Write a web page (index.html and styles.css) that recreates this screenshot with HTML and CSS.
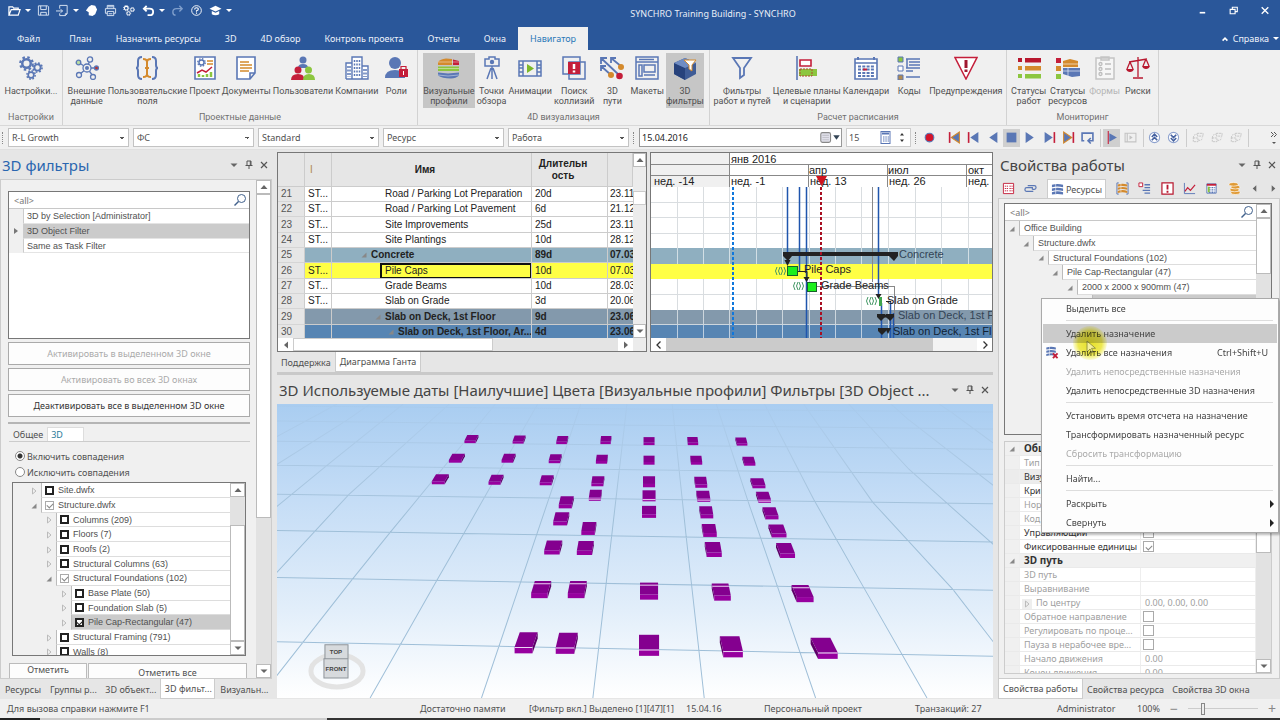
FILE: index.html
```html
<!DOCTYPE html>
<html lang="ru">
<head>
<meta charset="utf-8">
<title>SYNCHRO Training Building - SYNCHRO</title>
<link rel="stylesheet" href="styles.css">
</head>
<body>
<svg class="defs" aria-hidden="true">
  <symbol id="gear" viewBox="0 0 12 12"><circle cx="6" cy="6" r="3.400" fill="none" stroke="currentColor" stroke-width="2"/><circle cx="6" cy="6" r="5" fill="none" stroke="currentColor" stroke-width="1.800" stroke-dasharray="2 1.930"/></symbol>
  <symbol id="pin" viewBox="0 0 10 10"><path d="M3 1h4v4.500M3 1v4.500M6.300 1v4.500M1.500 5.500h7M5 5.500V9" fill="none" stroke="#555"/></symbol>
  <symbol id="cross" viewBox="0 0 10 10"><path d="M2 2l6 6M8 2l-6 6" fill="none" stroke="currentColor" stroke-width="1.200"/></symbol>
  <symbol id="drop" viewBox="0 0 10 10"><path d="M1.500 3.500h7l-3.500 3.500z" fill="#666"/></symbol>
  <symbol id="up" viewBox="0 0 10 10"><path d="M1.500 7h7l-3.500-4z" fill="#666"/></symbol>
  <symbol id="left" viewBox="0 0 10 10"><path d="M7 1.500v7l-4-3.500z" fill="#666"/></symbol>
  <symbol id="right" viewBox="0 0 10 10"><path d="M3 1.500v7l4-3.500z" fill="#666"/></symbol>
  <symbol id="open" viewBox="0 0 10 10"><path d="M7.500 2.500v5h-5z" fill="#888"/></symbol>
  <symbol id="shut" viewBox="0 0 10 10"><path d="M3.500 2v6l3.500-3z" fill="none" stroke="#bbb"/></symbol>
  <symbol id="lens" viewBox="0 0 14 14"><circle cx="8.500" cy="5.500" r="4" fill="none" stroke="#41618c"/><path d="M5.500 8.500L1.500 12.500" stroke="#41618c" stroke-width="1.500"/></symbol>
  <symbol id="layers" viewBox="0 0 24 24"><path d="M1 6q2-3 8-3.500l6 .5v6H1z" fill="#d48a2d"/><path d="M16 3.500l6 1.500v4h-6z" fill="#c41e3a"/><path d="M1 10.500h21V15H1z" fill="#8cc63f"/><path d="M1 16.500l10 1 11-1v3q-3 3-8 3-9 0-13-3z" fill="#5a77b5"/><path d="M1 6h21M1 12.500h21M1 19l10 1 11-1" stroke="#fff" stroke-width=".700" opacity=".6" fill="none"/></symbol>
  <symbol id="discs" viewBox="0 0 14 14"><path d="M1 2q6-2 12 0v2.500q-6-1.500-12 0zM1 6q6-2 12 0v2.500q-6-1.500-12 0zM1 10q6-2 12 0v2.500q-6-1.500-12 0z" fill="currentColor"/><path d="M5 1v11" stroke="#fff" stroke-width=".6"/></symbol>
  <symbol id="prev" viewBox="0 0 12 12"><path d="M10.500 1v10L3 6z" fill="#5a77b5"/></symbol>
  <symbol id="next" viewBox="0 0 12 12"><path d="M1.500 1v10L9 6z" fill="#5a77b5"/></symbol>
  <symbol id="form" viewBox="0 0 14 12"><path d="M7 1.500h6v3H7zM2.500 6.500h5v4h-5zM2.500 6.500q0-4 4-4M8 9h2q2 0 2-3" fill="none" stroke="#c3c3c3" stroke-dasharray="2 .8"/></symbol>
</svg>

<header class="titlebar">
  <div class="quick">
    <button aria-label="Открыть"><svg viewBox="0 0 14 12"><path d="M1 11V2h4l1 1.500h5V5M1 11l2.500-6H13L11 11z" fill="none" stroke="#fff" stroke-width="1.300"/></svg></button><i class="tri"></i>
    <button aria-label="Сохранить"><svg viewBox="0 0 14 12"><path d="M1.500 1h10l1 1v9h-11zM4 1v4h6V1M4 11V8h6v3" fill="none" stroke="#dfe8f5"/></svg></button>
    <button aria-label="Импорт"><svg viewBox="0 0 14 12"><path d="M4 4V.5h8v9l-2 2H4V9M0 6.500h7M5 4.500l2 2-2 2M12 9.500h-2v2" fill="none" stroke="#dfe8f5"/></svg></button><i class="tri"></i>
    <button aria-label="Панорама"><svg viewBox="0 0 14 12"><path d="M4 2l3-2 4 1 2 4-2 5-3 2-4-1v-3L1 6z" fill="#fff"/></svg></button>
    <button aria-label="Печать"><svg viewBox="0 0 14 12"><path d="M3.500 4V.5h7V4M3.500 9h-2V4h11v5h-2M3.500 7h7v4.500h-7zM4 2h6M5 9.500h4" fill="none" stroke="#dfe8f5"/></svg></button>
    <button class="white" aria-label="Параметры"><svg viewBox="0 0 14 12"><use href="#gear" width="7" height="7"/><use href="#gear" x="7" y="2" width="6" height="6"/><use href="#gear" x="3" y="6" width="6" height="6"/></svg></button>
    <button aria-label="Отменить"><svg viewBox="0 0 14 12"><path d="M5 1L2 4l3 3M2 4h6q4 0 4 3.500T8 11H6" fill="none" stroke="#fff" stroke-width="2"/></svg></button><i class="tri"></i>
    <button aria-label="Вернуть"><svg viewBox="0 0 14 12"><path d="M9 1l3 3-3 3M12 4H6Q2 4 2 7.500T5 11" fill="none" stroke="#7f9ecb" stroke-width="1.500"/></svg></button>
    <button aria-label="Помощь"><svg viewBox="0 0 14 12"><circle cx="7" cy="6" r="5.200" fill="none" stroke="#fff"/><path d="M5 4.800q0-1.800 2-1.800t2 1.500-2 1.800v1M7 8.200v1.200" fill="none" stroke="#fff" stroke-width="1.200"/></svg></button>
    <button aria-label="Обучение"><svg viewBox="0 0 14 12"><path d="M7 1l6.500 3-6.500 3-6.500-3zM3 6.500l4 2 4-2V10q-4 2-8 0z" fill="#fff"/></svg></button>
    <i class="tri bar"></i>
  </div>
  <h1 class="app-title">SYNCHRO Training Building - SYNCHRO</h1>
  <div class="winbtns">
    <button aria-label="Свернуть"><svg viewBox="0 0 10 10"><path d="M2 7h5" stroke="#fff" stroke-width="1.500"/></svg></button>
    <button aria-label="Восстановить"><svg viewBox="0 0 10 10"><path d="M1.500 4h4.500v4h-4.500zM3.500 4V2H8v4H6" fill="none" stroke="#fff"/></svg></button>
    <button class="white" aria-label="Закрыть"><svg viewBox="0 0 10 10"><use href="#cross"/></svg></button>
  </div>
</header>
<nav class="tabs">
  <button class="file">Файл</button><button>План</button><button>Назначить ресурсы</button><button>3D</button><button>4D обзор</button><button>Контроль проекта</button><button>Отчеты</button><button>Окна</button><button class="on">Навигатор</button>
  <button class="help"><svg viewBox="0 0 10 10"><path d="M2 7l3-3 3 3" fill="none" stroke="#fff" stroke-width="2"/></svg>Справка <i class="tri"></i></button>
</nav>

<section class="ribbon" aria-label="Навигатор">
  <div class="group g1"><div class="items">
    <button><svg viewBox="0 0 24 24" class="blue"><use href="#gear" x="0" y="0" width="15" height="15"/><use href="#gear" x="13" y="6" width="11" height="11"/><use href="#gear" x="7" y="14" width="10" height="10"/></svg>Настройки...</button>
  </div><h2>Настройки</h2></div>
  <div class="group g2"><div class="items">
    <button><svg viewBox="0 0 24 24"><path d="M12 12L3 6M12 12l3-8M12 12h9M12 12l-8 7M12 12l6 8" stroke="#5a77b5" stroke-width="1.300"/><g fill="#f0f0f0" stroke="#5a77b5" stroke-width="1.300"><circle cx="3.500" cy="6.500" r="2.300" fill="#b9dca0"/><circle cx="15" cy="3.500" r="2.600"/><circle cx="21.500" cy="12" r="2" fill="#b33" /><circle cx="4" cy="19" r="2.500"/><circle cx="18" cy="21" r="2.500"/><circle cx="12" cy="12" r="4"/></g><circle cx="12" cy="12" r="2" fill="#5a77b5"/></svg>Внешние<br>данные</button>
    <button><svg viewBox="0 0 24 24"><path d="M7 1q-4 0-4 4v4q0 3-2 3 2 0 2 3v4q0 4 4 4M17 1q4 0 4 4v4q0 3 2 3-2 0-2 3v4q0 4-4 4" fill="none" stroke="#5a77b5" stroke-width="2"/><path d="M8 3q4 0 4 3v12q0 3-4 3M16 3q-4 0-4 3v12q0 3 4 3M10 12h4" fill="none" stroke="#d48a2d" stroke-width="2"/></svg>Пользовательские<br>поля</button>
    <button><svg viewBox="0 0 24 24"><path d="M2 1h20v22H2z" fill="#fff" stroke="#5a77b5" stroke-width="1.600"/><g class="blue"><use href="#gear" x="4" y="2" width="9" height="9"/></g><path d="M14 5h6M14 8h6" stroke="#d48a2d" stroke-width="1.500"/><path d="M4 17l5-3 4 2 6-5" fill="none" stroke="#c41e3a" stroke-width="1.500"/><path d="M6 21v-3M10 21v-2M14 21v-3M18 21v-5" stroke="#8cc63f" stroke-width="2.500"/></svg>Проект</button>
    <button><svg viewBox="0 0 24 24"><path d="M3 1h18v16l-5 6H3zM21 17h-5v6" fill="#fff" stroke="#5a77b5" stroke-width="1.600"/><path d="M6 6h9M6 9h12M6 12h12M6 15h9" stroke="#d48a2d" stroke-width="1.600"/></svg>Документы</button>
    <button><svg viewBox="0 0 24 24"><circle cx="12" cy="4" r="3.500" fill="#5a77b5"/><path d="M7 12q0-4 5-4t5 4z" fill="#5a77b5"/><circle cx="7" cy="14" r="3.500" fill="#c41e3a"/><path d="M0 24q0-6 7-6t6 6z" fill="#c41e3a"/><circle cx="17.500" cy="14" r="3.500" fill="#8cc63f"/><path d="M12 24q0-6 6-6t6 6z" fill="#8cc63f"/></svg>Пользователи</button>
    <button><svg viewBox="0 0 24 24"><path d="M7 23V1h10v22M1 23V7h6v16M17 10h6v13H1" fill="#fff" stroke="#5a77b5" stroke-width="1.400"/><path d="M9.500 4v16M12 4v16M14.500 4v16M3 10v11M5 10v11M19 13v8M21 13v8" stroke="#5a77b5" stroke-width="1.500" stroke-dasharray="2 1.500"/></svg>Компании</button>
    <button class="narrow"><svg viewBox="0 0 24 24"><circle cx="11" cy="7" r="6" fill="#5a77b5"/><path d="M1 22q0-8 10-8t10 8z" fill="#5a77b5"/><path d="M15 13h9v8h-9z" fill="#c41e3a"/><path d="M17 13v-2.500h5V13M19.500 15v4M17.500 17h4" fill="none" stroke="#c41e3a" stroke-width="1.200"/><path d="M19.500 15v4" stroke="#fff"/></svg>Роли</button>
  </div><h2>Проектные данные</h2></div>
  <div class="group g3"><div class="items">
    <button class="active"><svg viewBox="0 0 24 24"><use href="#layers" width="24" height="24"/></svg>Визуальные<br>профили</button>
    <button><svg viewBox="0 0 24 24"><path d="M5 3h4V1h6v2h4v7H5zM12 10v13M11 12L7 23M13 12l4 11" fill="none" stroke="#5a77b5" stroke-width="1.500"/><circle cx="12" cy="6" r="2.200" fill="#5a77b5"/></svg>Точки<br>обзора</button>
    <button><svg viewBox="0 0 24 24"><path d="M1 5h22v15H1zM5 5v15M19 5v15M1 9h4M1 12h4M1 16h4M19 9h4M19 12h4M19 16h4" fill="none" stroke="#5a77b5" stroke-width="1.500"/><path d="M9 8v9l7-4.500z" fill="#7cb829"/></svg>Анимации</button>
    <button><svg viewBox="0 0 24 24"><path d="M1 1h17v17H1zM7 6h16v17H7z" fill="none" stroke="#5a77b5" stroke-width="1.500"/><path d="M6 6h12v12H6z" fill="#c41e3a"/><path d="M12 8v5M12 14.500v2" stroke="#fff" stroke-width="2.500"/></svg>Поиск<br>коллизий</button>
    <button class="narrow"><svg viewBox="0 0 24 24"><path d="M1 2l18 17M11 2l11 9M1 10l10 9M1 8V2h6M11 7V2h5M1 15v-5h5" fill="none" stroke="#5a77b5" stroke-width="1.800"/><circle cx="21" cy="11" r="3" fill="#d48a2d"/><circle cx="11" cy="19" r="3" fill="#d48a2d"/><circle cx="19.500" cy="20" r="3.300" fill="#c41e3a"/></svg>3D<br>пути</button>
    <button><svg viewBox="0 0 24 24"><path d="M1 1h22v22H1zM1 6h22M4 9h3v11H4zM9 9h11v7H9zM9 19h11M4 3.500h15" fill="none" stroke="#5a77b5" stroke-width="1.500"/></svg>Макеты</button>
    <button class="active"><svg viewBox="0 0 24 24"><path d="M1 7l11-5 11 5v11l-11 6-11-6z" fill="#3f5c96"/><path d="M1 7l11 5v12l-11-6z" fill="#27427c"/><path d="M12 2l11 5-11 5-11-5z" fill="#6f8cc3"/><path d="M11 4h12l-4 5v6l-3-2V9z" fill="#fff" stroke="#d48a2d"/></svg>3D<br>фильтры</button>
  </div><h2>4D визуализация</h2></div>
  <div class="group g4"><div class="items">
    <button><svg viewBox="0 0 24 24"><path d="M3 2h18l-7 10v7l-4 3V12z" fill="none" stroke="#5a77b5" stroke-width="1.800"/></svg>Фильтры<br>работ и путей</button>
    <button><svg viewBox="0 0 24 24"><path d="M2 0v24" stroke="#5a77b5" stroke-width="1.600"/><path d="M5 4h11v6H5z" fill="#fff" stroke="#c41e3a" stroke-width="1.600"/><path d="M4 13h18v7H4z" fill="#8cc63f"/><path d="M5 13h12v7H5z" fill="none" stroke="#b0492c" stroke-dasharray="2 1"/></svg>Целевые планы<br>и сценарии</button>
    <button><svg viewBox="0 0 24 24"><path d="M1 3h22v20H1zM1 7h22" fill="#fff" stroke="#5a77b5" stroke-width="1.600"/><path d="M4 1v4M20 1v4M4 10.500h16M4 13.500h16M4 17h16M4 20h16" stroke="#5a77b5" stroke-width="2" stroke-dasharray="3 1.300"/><path d="M9 13.500h4" stroke="#c41e3a" stroke-width="2"/></svg>Календари</button>
    <button class="codes"><svg viewBox="0 0 24 24"><path d="M1 1h5v5H1z" fill="#8cc63f" stroke="#5a77b5"/><path d="M1 10h5v5H1z" fill="#fff" stroke="#5a77b5"/><path d="M1 19h5v5H1z" fill="#b08a50" stroke="#5a77b5"/><path d="M9 3h14M12 6h11M12 9h11M9 12h14M9 15h7M9 21h14M10 3v9" stroke="#5a77b5" stroke-width="1.500"/></svg>Коды</button>
    <button><svg viewBox="0 0 24 24"><path d="M1 1.500h22L12 23z" fill="#fff" stroke="#c41e3a" stroke-width="1.500"/><path d="M12 4v8M12 13.500v2.500" stroke="#a01830" stroke-width="3"/></svg>Предупреждения</button>
  </div><h2>Расчет расписания</h2></div>
  <div class="group g5"><div class="items">
    <button><svg viewBox="0 0 24 24"><path d="M1 2h4v4H1zM8 2h16v4.500H8z" fill="#b8182f"/><path d="M1 10h4v4H1zM8 10h16v4.500H8z" fill="#d48a2d"/><path d="M1 18h4v4H1zM8 18h16v4.500H8z" fill="#8cc63f"/></svg>Статусы<br>работ</button>
    <button><svg viewBox="0 0 24 24"><path d="M0 2h5v5H0z" fill="#c41e3a"/><path d="M0 10h5v5H0z" fill="#d48a2d"/><path d="M0 18h5v5H0z" fill="#8cc63f"/><path d="M7 5l7-2 8 2v6H7z" fill="#d48a2d"/><path d="M7 12h17v8l-8 1-9-3z" fill="#5a77b5"/><path d="M7 8h16M7 15h17M12 12v8" stroke="#fff" stroke-width=".600"/></svg>Статусы<br>ресурсов</button>
    <button class="off" disabled><svg viewBox="0 0 24 24"><path d="M3 2h18v21H3zM8 1h8v3H8z" fill="#f6f6f6" stroke="#c4c4c4" stroke-width="1.500"/><g fill="none" stroke="#bdbdbd" stroke-width="1.300"><circle cx="7.500" cy="8" r="1.500"/><circle cx="7.500" cy="13" r="1.500"/><circle cx="7.500" cy="18" r="1.500"/><path d="M12 8h6M12 13h6M12 18h6"/></g></svg>Формы</button>
    <button class="narrow"><svg viewBox="0 0 24 24"><path d="M12 1v20M7 22h10M3 6l18-3M4 6l-3 7M4 6l3 7M20 3l-3 7M20 3l3 7" fill="none" stroke="#b8182f" stroke-width="1.300"/><path d="M0 13h8q-1 3-4 3t-4-3zM16 10h8q-1 3-4 3t-4-3z" fill="#b8182f"/></svg>Риски</button>
  </div><h2>Мониторинг</h2></div>
</section>

<section class="toolbar" aria-label="Панель инструментов">
  <i class="grip"></i>
  <select aria-label="Профиль"><option>R-L Growth</option></select>
  <select aria-label="Код"><option>ФС</option></select>
  <select aria-label="Стандарт"><option>Standard</option></select>
  <select aria-label="Ресурс"><option>Ресурс</option></select>
  <select aria-label="Работа"><option>Работа</option></select>
  <i class="grip"></i>
  <label class="date"><input value="15.04.2016" aria-label="Дата"><svg viewBox="0 0 20 12"><rect x="1.500" y="1.500" width="9" height="9" rx="1.500" fill="#e0e0ea" stroke="#888"/><path d="M3 4h6M3 6h6M3 8h6" stroke="#c4c4cc"/><path d="M13 4h6l-3 4z" fill="#345"/></svg></label>
  <label class="spin"><input value="15" aria-label="Шаг"><svg viewBox="0 0 32 14"><rect x="3" y="1" width="9" height="12" fill="#fff" stroke="#5a77b5"/><path d="M4 3h7" stroke="#5a77b5" stroke-width="2"/><path d="M5 6.500h6M5 8.500h6M5 10.500h6" stroke="#5a77b5" stroke-dasharray="1.500 .8"/><path d="M22 5h4l-2-2.500zM22 9h4l-2 2.500z" fill="#333"/></svg></label>
  <i class="grip"></i>
  <div class="player">
    <button class="rec" aria-label="Запись"><svg viewBox="0 0 12 12"><circle cx="6" cy="6" r="4" fill="#d4142a" stroke="#5a77b5"/></svg></button>
    <button aria-label="Начало"><svg viewBox="0 0 12 12"><path d="M10.500 1v10L3 6z" fill="#5a77b5" stroke="#d48a2d"/><path d="M1.500 1v10" stroke="#c41e3a" stroke-width="1.500"/></svg></button>
    <button aria-label="Шаг назад"><svg viewBox="0 0 12 12"><use href="#prev" width="12" height="12"/><path d="M1.500 1v10" stroke="#c41e3a" stroke-width="1.500"/></svg></button>
    <button aria-label="Назад"><svg viewBox="0 0 12 12"><use href="#prev" width="12" height="12"/></svg></button>
    <button class="active" aria-label="Стоп"><svg viewBox="0 0 12 12"><path d="M1.500 1.500h9v9h-9z" fill="#5a77b5"/></svg></button>
    <button aria-label="Вперед"><svg viewBox="0 0 12 12"><use href="#next" width="12" height="12"/></svg></button>
    <button aria-label="Шаг вперед"><svg viewBox="0 0 12 12"><use href="#next" width="12" height="12"/><path d="M10.500 1v10" stroke="#c41e3a" stroke-width="1.500"/></svg></button>
    <button aria-label="Конец"><svg viewBox="0 0 12 12"><path d="M1.500 1v10L9 6z" fill="#5a77b5" stroke="#d48a2d"/><path d="M10.500 1v10" stroke="#c41e3a" stroke-width="1.500"/></svg></button>
    <button class="sep" aria-label="Цикл"><svg viewBox="0 0 12 12"><path d="M3 9H1V2h10v7H7M9 6.500L6.500 9 9 11.500" fill="none" stroke="#5a77b5" stroke-width="1.500"/></svg></button>
    <button class="active" aria-label="Фокус"><svg viewBox="0 0 12 12"><path d="M3 0v12" stroke="#c41e3a"/><path d="M4 2v8l7-4z" fill="#5a77b5"/></svg></button>
    <button class="sep" aria-label="Кадр"><svg viewBox="0 0 12 12"><path d="M1 2h10v8H1zM3 2v8" fill="none" stroke="#c3c3c3"/><path d="M5 4v4l3-2z" fill="#c3c3c3"/></svg></button>
    <button aria-label="Вверх"><svg viewBox="0 0 12 12"><circle cx="6" cy="6" r="4.700" fill="#fff" stroke="#8fa3cf"/><path d="M3.500 5.500L6 3l2.500 2.500M3.500 8.500L6 6l2.500 2.500" fill="none" stroke="#45619f" stroke-width="1.500"/></svg></button>
    <button class="sep" aria-label="Вниз"><svg viewBox="0 0 12 12"><circle cx="6" cy="6" r="4.700" fill="#fff" stroke="#8fa3cf"/><path d="M3.500 3.500L6 6l2.500-2.500M3.500 6.500L6 9l2.500-2.500" fill="none" stroke="#45619f" stroke-width="1.500"/></svg></button>
    <button aria-label="Форма 1" disabled><svg viewBox="0 0 14 12"><use href="#form" width="14" height="12"/></svg></button>
    <button aria-label="Форма 2" disabled><svg viewBox="0 0 14 12"><use href="#form" width="14" height="12"/></svg></button>
    <button class="sep" aria-label="Форма 3" disabled><svg viewBox="0 0 14 12"><use href="#form" width="14" height="12"/></svg></button>
  </div>
  <button class="more" aria-label="Еще"><svg viewBox="0 0 8 18"><path d="M1 3l2.500 2.500L1 8M4 3l2.500 2.500L4 8" fill="none" stroke="#555"/><path d="M2 13h4l-2 2z" fill="#555"/></svg></button>
</section>

<main class="work">
  <section class="panel left">
    <header><h2 class="accent">3D фильтры</h2><button aria-label="Меню"><svg><use href="#drop"/></svg></button><button aria-label="Закрепить"><svg><use href="#pin"/></svg></button><button aria-label="Закрыть"><svg><use href="#cross"/></svg></button></header>
    <div class="pbody">
      <div class="filters">
        <div class="box flist">
          <label class="search"><input placeholder="&lt;all&gt;" aria-label="Поиск фильтра"><svg><use href="#lens"/></svg></label>
          <ul class="frows"><li>3D by Selection [Administrator]</li><li class="sel">3D Object Filter</li><li>Same as Task Filter</li></ul>
        </div>
        <button class="wide" disabled>Активировать в выделенном 3D окне</button>
        <button class="wide" disabled>Активировать во всех 3D окнах</button>
        <button class="wide">Деактивировать все в выделенном 3D окне</button>
        <hr class="thick">
        <div class="minitabs"><button>Общее</button><button class="on">3D</button></div>
        <label class="radio"><input type="radio" name="match" checked>Включить совпадения</label>
        <label class="radio"><input type="radio" name="match">Исключить совпадения</label>
        <div class="box treebox">
          <ul class="tree">
            <li class="l1"><svg><use href="#shut"/></svg><label><input type="checkbox">Site.dwfx</label></li>
            <li class="l1"><svg><use href="#open"/></svg><label><input type="checkbox" class="soft" checked>Structure.dwfx</label></li>
            <li class="l2"><svg><use href="#shut"/></svg><label><input type="checkbox">Columns (209)</label></li>
            <li class="l2"><svg><use href="#shut"/></svg><label><input type="checkbox">Floors (7)</label></li>
            <li class="l2"><svg><use href="#shut"/></svg><label><input type="checkbox">Roofs (2)</label></li>
            <li class="l2"><svg><use href="#shut"/></svg><label><input type="checkbox">Structural Columns (63)</label></li>
            <li class="l2"><svg><use href="#open"/></svg><label><input type="checkbox" class="soft" checked>Structural Foundations (102)</label></li>
            <li class="l3"><svg><use href="#shut"/></svg><label><input type="checkbox">Base Plate (50)</label></li>
            <li class="l3"><svg><use href="#shut"/></svg><label><input type="checkbox">Foundation Slab (5)</label></li>
            <li class="l3 sel"><svg><use href="#shut"/></svg><label><input type="checkbox" checked>Pile Cap-Rectangular (47)</label></li>
            <li class="l2"><svg><use href="#shut"/></svg><label><input type="checkbox">Structural Framing (791)</label></li>
            <li class="l2"><svg><use href="#shut"/></svg><label><input type="checkbox">Walls (8)</label></li>
          </ul>
          <div class="sb"><button aria-label="Вверх"><svg><use href="#up"/></svg></button><i class="track s28"></i><i class="thumb"></i><button aria-label="Вниз"><svg><use href="#drop"/></svg></button></div>
        </div>
        <div class="cut"><button>Отметить</button><button>Отметить все</button></div>
      </div>
      <div class="sb outer"><button aria-label="Вверх"><svg><use href="#up"/></svg></button><i class="thumb"></i><i class="track s146"></i><button aria-label="Вниз"><svg><use href="#drop"/></svg></button></div>
    </div>
    <nav class="docktabs"><button>Ресурсы</button><button>Группы р...</button><button>3D объект...</button><button class="on">3D фильт...</button><button>Визуальн...</button></nav>
  </section>

  <section class="center">
    <div class="schedule">
      <div class="gridframe">
        <div class="gridtop">
          <table>
            <colgroup><col class="c1"><col class="c2"><col class="c3"><col class="c4"><col class="c5"></colgroup>
            <thead><tr><th></th><th class="mark">I</th><th>Имя</th><th>Длительн<br>ость</th><th></th></tr></thead>
            <tbody>
              <tr><th>21</th><td>ST...</td><td><span class="n2">Road / Parking Lot Preparation</span></td><td>20d</td><td>23.11</td></tr>
              <tr><th>22</th><td>ST...</td><td><span class="n2">Road / Parking Lot Pavement</span></td><td>6d</td><td>21.12</td></tr>
              <tr><th>23</th><td>ST...</td><td><span class="n2">Site Improvements</span></td><td>25d</td><td>23.11</td></tr>
              <tr><th>24</th><td>ST...</td><td><span class="n2">Site Plantings</span></td><td>10d</td><td>28.12</td></tr>
              <tr class="sum1"><th>25</th><td></td><td><span class="n1"><svg><use href="#open"/></svg>Concrete</span></td><td>89d</td><td>07.03</td></tr>
              <tr class="cur"><th>26</th><td>ST...</td><td><span class="n2 focus">Pile Caps</span></td><td>10d</td><td>07.03</td></tr>
              <tr><th>27</th><td>ST...</td><td><span class="n2">Grade Beams</span></td><td>10d</td><td>28.03</td></tr>
              <tr><th>28</th><td>ST...</td><td><span class="n2">Slab on Grade</span></td><td>3d</td><td>20.06</td></tr>
              <tr class="sum2"><th>29</th><td></td><td><span class="n2"><svg><use href="#open"/></svg>Slab on Deck, 1st Floor</span></td><td>9d</td><td>23.06</td></tr>
              <tr class="sum3"><th>30</th><td></td><td><span class="n3"><svg><use href="#open"/></svg>Slab on Deck, 1st Floor, Ar...</span></td><td>4d</td><td>23.06</td></tr>
            </tbody>
          </table>
          <div class="sb pale"><button aria-label="Вверх"><svg><use href="#up"/></svg></button><i class="track s24"></i><i class="knob"></i><i class="track grow"></i><button aria-label="Вниз"><svg><use href="#drop"/></svg></button></div>
        </div>
        <div class="hb"><button aria-label="Влево"><svg><use href="#left"/></svg></button><i class="knob"></i><i class="track grow"></i><button aria-label="Вправо"><svg><use href="#right"/></svg></button><i class="corner"></i></div>
      </div>
      <div class="ganttframe">
        <svg class="gantt" role="img" aria-label="Диаграмма Ганта">
          <rect width="100%" height="34" fill="#fff"/>
          <rect width="79" height="34" fill="#f0f0f0"/>
          <g stroke="#d9dde0"><path d="M26.500 34V185M52.500 34V185M78.500 34V185M105.500 34V185M131.500 34V185M158.500 34V185M184.500 34V185M210.500 34V185M237.500 34V185M264.500 34V185M290.500 34V185M317.500 34V185"/><path d="M0 49.500h800M0 64.500h800M0 80.500h800M0 141.500h800"/></g>
          <rect y="95" width="100%" height="16" fill="#8fafc0"/><rect y="111" width="100%" height="15" fill="#ffff45"/><rect y="157" width="100%" height="15" fill="#8399ac"/><rect y="172" width="100%" height="16" fill="#5785b3"/>
          <g stroke="#fff" opacity=".6"><path d="M26.500 95v16M52.500 95v16M78.500 95v16M105.500 95v16M131.500 95v16M158.500 95v16M184.500 95v16M210.500 95v16M237.500 95v16M264.500 95v16M290.500 95v16M317.500 95v16M26.500 157v30M52.500 157v30M78.500 157v30M105.500 157v30M131.500 157v30M158.500 157v30M184.500 157v30M210.500 157v30M237.500 157v30M0 171.500h800"/></g>
          <path d="M0 11.500h800M0 22.500h800M78.500 0v34M157.500 12v22M236.500 12v22M315.500 12v22" stroke="#888" fill="none"/>
          <g class="glabel"><text x="80" y="10">янв 2016</text><text x="158" y="21">апр</text><text x="237" y="21">июл</text><text x="317" y="21">окт</text><text x="3" y="32">нед. -14</text><text x="80" y="32">нед. -1</text><text x="159" y="32">нед. 13</text><text x="238" y="32">нед. 26</text><text x="317" y="32">нед.</text></g>
          <path d="M221.500 34v95M163 133.500h80M243.500 133v40" stroke="#888" fill="none"/>
          <path d="M136.500 34V110M148.500 34V118M155.500 34V185M227.500 34V144M230.500 150V185M239.500 148V185M242.500 160V185" stroke="#1f55ad" stroke-width="1.500" fill="none"/>
          <path d="M132 101h113" stroke="#222" stroke-width="4"/><path d="M132 99h9v4l-4 5-5-5zM238 99h9v4l-4 5-5-5z" fill="#222"/>
          <path d="M227 163h14" stroke="#222" stroke-width="3"/><path d="M226 161h8v3l-4 4-4-4zM235 161h8v3l-4 4-4-4zM227 175h8v3l-4 4-4-4zM234 175h6l-3 6z" fill="#222"/>
          <path d="M146 118.500h10v9M235 148.500h5" stroke="#222" fill="none"/><path d="M133.500 107h6l-3 6zM152.500 124h6l-3 5zM224.500 141h6l-3 5z" fill="#222"/>
          <rect x="136.500" y="113.500" width="10" height="9" fill="#1cf01c" stroke="#17612a"/><rect x="156.500" y="129.500" width="9" height="9" fill="#1cf01c" stroke="#17612a"/><rect x="228" y="144" width="3" height="9" fill="#3da44d"/>
          <path d="M126 114q-3 4 0 8M129 114q-3 4 0 8M130 114q3 4 0 8M133 114q3 4 0 8M144 129q-3 4 0 8M147 129q-3 4 0 8M148 129q3 4 0 8M151 129q3 4 0 8M217 144q-3 4 0 8M220 144q-3 4 0 8M221 144q3 4 0 8M224 144q3 4 0 8" fill="none" stroke="#449866"/>
          <g class="glabel"><text x="248" y="105" fill="#345">Concrete</text><text x="153" y="120">Pile Caps</text><text x="170" y="136">Grade Beams</text><text x="236" y="151">Slab on Grade</text><text x="247" y="166" fill="#345">Slab on Deck, 1st Fl</text><text x="242" y="182" fill="#123">Slab on Deck, 1st Fl</text></g>
          <path d="M82 34V185" stroke="#0f77dc" stroke-width="2" stroke-dasharray="3 2"/>
          <path d="M170 34V185" stroke="#a80f22" stroke-width="2" stroke-dasharray="3 2"/><path d="M165 23h11l-5.500 10z" fill="#d0131f"/>
        </svg>
        <div class="hb flat"><button aria-label="Влево"><svg viewBox="0 0 10 10"><path d="M6.500 1.500L3 5l3.500 3.500" fill="none" stroke="#333" stroke-width="1.300"/></svg></button><i class="thumb5"></i><i class="track1"></i><button aria-label="Вправо"><svg viewBox="0 0 10 10"><path d="M3.500 1.500L7 5 3.500 8.500" fill="none" stroke="#333" stroke-width="1.300"/></svg></button></div>
      </div>
    </div>
    <nav class="docktabs top"><button>Поддержка</button><button class="on">Диаграмма Ганта</button></nav>
    <section class="view">
      <header><h2>3D Используемые даты [Наилучшие] Цвета [Визуальные профили] Фильтры [3D Object ...</h2><button aria-label="Меню"><svg><use href="#drop"/></svg></button><button aria-label="Закрепить"><svg><use href="#pin"/></svg></button><button aria-label="Закрыть"><svg><use href="#cross"/></svg></button></header>
      <svg class="scene" viewBox="277 405 716 293" preserveAspectRatio="xMidYMid slice" role="img" aria-label="3D окно">
        <defs><linearGradient id="sky" x1="0" y1="0" x2="0" y2="1"><stop offset="0" stop-color="#a9cdf1"/><stop offset=".33" stop-color="#c5ddf6"/><stop offset=".7" stop-color="#e2eefa"/><stop offset="1" stop-color="#fff"/></linearGradient>
        <linearGradient id="fade" gradientUnits="userSpaceOnUse" x1="0" y1="405" x2="0" y2="520"><stop offset="0" stop-color="#9fbcd8" stop-opacity=".15"/><stop offset="1" stop-color="#9fbfd8"/></linearGradient></defs>
        <rect x="277" y="405" width="716" height="293" fill="url(#sky)"/>
        <path fill="none" stroke="url(#fade)" d="M277 578L992 590.500M277 642L992 656.500M277 531L992 542.500M277 495L992 504.500M277 466L992 475M277 442L992 450M277 422L992 430M277 407L992 413M593 698L627 405M482 698L581 405M371 698L438 580 465 533 538 405M277 677L353 580 391 533 496 405M277 574L350 495 450 405M277 508L332 463 404 405M277 466L348 421 371 405M277 438L318 416 338 405M704 698L686 537 672 405M815 698L777 587 748 503 716 405M926 698L863 588 813 500 764 405M992 642L952 590 872 503 803 405M992 545L908 470 848 405M992 486L907 420 890 405M992 444L950 413 938 405"/>
        <g id="caps"></g>
        <ellipse cx="338" cy="671" rx="26" ry="16" fill="none" stroke="#e3e3e3" stroke-width="5"/>
        <path d="M326 645h23v14h-23zM325 659h24v19h-24z" fill="#d7dadd" stroke="#8e9499"/>
        <g class="nav"><text x="337" y="654">TOP</text><text x="337" y="671">FRONT</text></g>
      </svg>
    </section>
  </section>

  <section class="panel right">
    <header><h2>Свойства работы</h2><button aria-label="Меню"><svg><use href="#drop"/></svg></button><button aria-label="Закрепить"><svg><use href="#pin"/></svg></button><button aria-label="Закрыть"><svg><use href="#cross"/></svg></button></header>
    <nav class="icontabs">
      <button aria-label="Общие"><svg viewBox="0 0 14 14"><path d="M1.500 1.500h11v11h-11z" fill="#fff" stroke="#c41e3a"/><path d="M3 4.500h3.500M3 7h3.500M3 9.500h3.500M8 4.500h3.500M8 7h3.500M8 9.500h3.500" stroke="#c41e3a" stroke-dasharray="1.500 .7"/></svg></button>
      <button aria-label="Связи"><svg viewBox="0 0 14 14"><path d="M4 4h7q2 0 2 2t-2 2H9M10 10H3q-2 0-2-2t2-2h2M5 6h4v2" fill="none" stroke="#5a77b5" stroke-width="1.300"/></svg></button>
      <button class="on"><svg viewBox="0 0 14 14" class="blue"><use href="#discs"/></svg>Ресурсы</button>
      <button aria-label="Стоимость"><svg viewBox="0 0 14 14"><path d="M3 1H1v12h2M11 1h2v12h-2" fill="none" stroke="#5a77b5"/><g class="amber"><use href="#discs" x="1" width="12" height="14"/></g></svg></button>
      <button aria-label="Коды"><svg viewBox="0 0 14 14"><path d="M1 1h4v4H1z" fill="#fff" stroke="#c41e3a"/><path d="M7 3h6M7 6h6M5 9h8M7 12h6" stroke="#5a77b5" stroke-width="1.500"/></svg></button>
      <button aria-label="Предупреждения"><svg viewBox="0 0 14 14"><path d="M1 1h12v12H1z" fill="#fff" stroke="#b8182f" stroke-width="1.300"/><path d="M7 3v5M7 9.500v2" stroke="#b8182f" stroke-width="2"/></svg></button>
      <button aria-label="График"><svg viewBox="0 0 14 14"><path d="M1.500 1v11.500H13" fill="none" stroke="#5a77b5"/><path d="M2 10l3-4 3 3 5-6" fill="none" stroke="#c41e3a" stroke-width="1.300"/></svg></button>
      <button aria-label="Поля"><svg viewBox="0 0 14 14"><path d="M2 2h10v10H2z" fill="#fff" stroke="#5a77b5"/><path d="M2 3h10" stroke="#c41e3a" stroke-width="2"/><path d="M4 6h7M4 8.500h7M4 11h7" stroke="#5a77b5" stroke-width="1.500" stroke-dasharray="2 1"/><path d="M4 5v6" stroke="#8cc63f" stroke-width="2"/></svg></button>
      <button aria-label="Затраты"><svg viewBox="0 0 14 14"><g fill="#e09a35" stroke="#fff" stroke-width=".7"><ellipse cx="8" cy="11.500" rx="5" ry="2"/><ellipse cx="7" cy="8.500" rx="5" ry="2"/><ellipse cx="8" cy="5.500" rx="5" ry="2"/><ellipse cx="6" cy="2.500" rx="5" ry="2"/></g></svg></button>
      <button class="arrow" aria-label="Влево"><svg><use href="#left"/></svg></button><button class="arrow" aria-label="Вправо"><svg><use href="#right"/></svg></button>
    </nav>
    <div class="rbody">
      <div class="box rtree">
        <div class="rmain">
          <label class="search"><input placeholder="&lt;all&gt;" aria-label="Поиск ресурса"><svg><use href="#lens"/></svg></label>
          <ul class="rt">
            <li class="r0"><svg><use href="#open"/></svg><span>Office Building</span></li>
            <li class="r1"><svg><use href="#open"/></svg><span>Structure.dwfx</span></li>
            <li class="r2"><svg><use href="#open"/></svg><span>Structural Foundations (102)</span></li>
            <li class="r3"><svg><use href="#open"/></svg><span>Pile Cap-Rectangular (47)</span></li>
            <li class="r4"><svg><use href="#open"/></svg><span>2000 x 2000 x 900mm (47)</span></li>
            <li class="r5 sel"><span>Pile Cap-Rectangular [718574]</span></li>
          </ul>
        </div>
        <div class="sb"><button aria-label="Вверх"><svg><use href="#up"/></svg></button><i class="thumb s56"></i><i class="track grow"></i></div>
      </div>
      <div class="props">
        <table>
          <colgroup><col class="p1"><col class="p2"><col></colgroup>
          <tbody>
            <tr class="cat"><td><svg><use href="#open"/></svg></td><th colspan="2">Общие</th></tr>
            <tr class="dim"><td></td><td>Тип</td><td></td></tr>
            <tr class="hot"><td></td><td>Визуальн</td><td></td></tr>
            <tr><td></td><td>Кривая</td><td></td></tr>
            <tr class="dim"><td></td><td>Норма</td><td></td></tr>
            <tr class="dim"><td></td><td>Код</td><td></td></tr>
            <tr><td></td><td>Управляющий</td><td><input type="checkbox" class="soft" aria-label="Управляющий"></td></tr>
            <tr><td></td><td>Фиксированные единицы</td><td><input type="checkbox" class="soft strong" checked aria-label="Фиксированные единицы"></td></tr>
            <tr class="cat"><td><svg><use href="#open"/></svg></td><th colspan="2">3D путь</th></tr>
            <tr class="dim"><td></td><td>3D путь</td><td></td></tr>
            <tr class="dim"><td></td><td>Выравнивание</td><td></td></tr>
            <tr class="dim"><td></td><td><svg class="sub"><use href="#shut"/></svg>По центру</td><td>0.00, 0.00, 0.00</td></tr>
            <tr class="dim"><td></td><td>Обратное направление</td><td><input type="checkbox" class="soft" aria-label="Обратное направление"></td></tr>
            <tr class="dim"><td></td><td>Регулировать по проце...</td><td><input type="checkbox" class="soft" aria-label="Регулировать по процентам"></td></tr>
            <tr class="dim"><td></td><td>Пауза в нерабочее вре...</td><td><input type="checkbox" class="soft" aria-label="Пауза в нерабочее время"></td></tr>
            <tr class="dim"><td></td><td>Начало движения</td><td>0.00</td></tr>
            <tr class="dim"><td></td><td>Конец движения</td><td>0.00</td></tr>
          </tbody>
        </table>
        <div class="sb"><i class="thumb"></i><i class="track s106"></i><button aria-label="Вниз"><svg><use href="#drop"/></svg></button></div>
      </div>
    </div>
    <nav class="docktabs"><button class="on">Свойства работы</button><button>Свойства ресурса</button><button>Свойства 3D окна</button></nav>
    <div class="menu" role="menu">
      <button role="menuitem">Выделить все</button><hr>
      <button role="menuitem" class="hover">Удалить назначение</button>
      <button role="menuitem"><svg class="mi" viewBox="0 0 14 14"><g class="blue"><use href="#discs" width="12" height="12"/></g><path d="M8 8l5 5M13 8l-5 5" stroke="#c41e3a" stroke-width="2"/></svg>Удалить все назначения<kbd>Ctrl+Shift+U</kbd></button>
      <button role="menuitem" disabled>Удалить непосредственные назначения</button>
      <button role="menuitem">Удалить непосредственные 3D назначения</button><hr>
      <button role="menuitem">Установить время отсчета на назначение</button>
      <button role="menuitem">Трансформировать назначенный ресурс</button>
      <button role="menuitem" disabled>Сбросить трансформацию</button><hr>
      <button role="menuitem">Найти...</button><hr>
      <button role="menuitem">Раскрыть<i class="subm"></i></button>
      <button role="menuitem">Свернуть<i class="subm"></i></button>
      <svg class="pointer" viewBox="0 0 40 40"><defs><radialGradient id="halo"><stop offset="0" stop-color="#e8e229"/><stop offset=".7" stop-color="#ece632" stop-opacity=".85"/><stop offset="1" stop-color="#f4f04a" stop-opacity=".2"/></radialGradient></defs><circle cx="20" cy="20" r="17" fill="url(#halo)"/><path d="M17 18v11l3-3 2 4 1.500-.8-2-3.900h4z" fill="#f7f2a0" stroke="#9a9a40"/></svg>
    </div>
  </section>
</main>

<footer class="status">
  <span>Для вызова справки нажмите F1</span><span>Достаточно памяти</span><span>[Фильтр вкл.]</span><span>Выделено [1][47][1]</span><span>15.04.16</span><span>Персональный проект</span><span>Транзакций: 27</span><span>Administrator</span><span>100%</span>
  <div class="zoom"><button aria-label="Уменьшить">−</button><input type="range" min="0" max="100" value="20" aria-label="Масштаб"><button aria-label="Увеличить">+</button></div>
</footer>
<div class="edge"></div>
<script src="scene.js"></script>
</body>
</html>
```
FILE: styles.css
```css
* { box-sizing: border-box; }
body { margin: 0; height: 100vh; display: flex; flex-direction: column; overflow: hidden; background: #e6e6e6; color: #505050; font: 9px/11px "Noto Sans", "Open Sans", sans-serif; }
button, input, select { font: inherit; color: inherit; margin: 0; padding: 0; border: 0; background: none; border-radius: 0; }
button { white-space: nowrap; }
h1, h2 { margin: 0; font-weight: 400; }
ul { list-style: none; margin: 0; padding: 0; }
svg { flex: none; display: block; }
i { font-style: normal; }
.defs { position: absolute; width: 0; height: 0; }
.blue { color: #5a77b5; }
.amber { color: #d48a2d; }
.white { color: #fff; }

.titlebar { display: grid; grid-template-columns: 1fr auto 1fr; align-items: start; background: #2a579a; color: #e8eef7; height: 27px; }
.quick { display: flex; align-items: center; gap: 6px; padding: 4px 0 0 8px; }
.quick button svg { width: 13px; height: 13px; }
.quick button + .tri { margin-left: -2px; }
.tri { width: 0; height: 0; border: 3px solid transparent; border-top-color: #fff; border-bottom: 0; flex: none; }
.quick .bar { margin-left: 0; }
.app-title { font-size: 9px; padding: 8px 0 0 146px; }
.winbtns { display: flex; justify-content: flex-end; gap: 19px; padding: 5px 9px 0 0; }
.winbtns svg { width: 12px; height: 11px; }

.tabs { display: flex; background: #2a579a; color: #eef3fa; height: 23px; }
.tabs button { padding: 0 12px; }
.tabs .file { padding: 0 17px; }
.tabs .on { background: #f0f0f0; color: #2a79b8; }
.tabs .help { margin-left: auto; padding: 0 1px; display: flex; align-items: center; gap: 4px; }
.help svg { width: 8px; height: 8px; }

.ribbon { display: flex; background: #f0f0f0; height: 76px; border-bottom: 1px solid #d8d8d8; font-family: Roboto, "Noto Sans", sans-serif; line-height: 10px; }
.group { display: flex; flex-direction: column; border-right: 1px solid #d2d2d2; padding-top: 3px; }
.g1 { width: 63px; } .g2 { width: 355px; } .g3 { width: 292px; } .g4 { width: 297px; } .g5 { width: 152px; }
.items { display: flex; justify-content: center; gap: 2px; height: 55px; }
.items button { display: flex; flex-direction: column; align-items: center; text-align: center; padding-top: 3px; line-height: 10px; }
.items button svg { width: 24px; height: 24px; margin-bottom: 6px; }
.items .narrow { min-width: 32px; }
.items .codes { min-width: 36px; }
.items .active { background: #c6c6c6; }
.items .off { color: #b5b5b5; }
.ribbon h2 { font-size: 9px; text-align: center; padding-top: 4px; color: #707070; }

.toolbar { display: flex; align-items: center; gap: 4px; background: #f0f0f0; height: 24px; padding: 0 2px; border-bottom: 1px solid #e0e0e0; }
.grip { width: 2px; height: 12px; flex: none; border-left: 1px dotted #888; }
.toolbar select { appearance: none; width: 121px; height: 19px; border: 1px solid #c3c3c3; padding: 0 3px; background: #fff conic-gradient(from -45deg at 50% 100%, #555 90deg, transparent 0) no-repeat right 4px center / 4px 2px; }
.date, .spin { display: flex; align-items: center; background: #fff; height: 19px; border: 1px solid #999; }
.date { width: 203px; color: #222; }
.spin { width: 65px; border-color: #ccc; }
.date input, .spin input { flex: 1; min-width: 0; padding-left: 2px; height: 100%; }
.date svg { width: 22px; height: 13px; }
.spin svg { width: 32px; height: 15px; }
.player { display: flex; align-items: center; gap: 2px; height: 20px; }
.player button { width: 17px; height: 18px; display: grid; place-items: center; }
.player svg { width: 13px; height: 13px; }
.player .rec { margin-right: 6px; }
.player .active { background: #cfcfcf; }
.player .sep { width: 22px; padding-right: 5px; border-right: 1px solid #ccc; }
.more { margin-left: auto; }
.more svg { width: 8px; height: 18px; }

.work { flex: 1; min-height: 0; display: grid; grid-template-columns: 272px minmax(0, 1fr) 282px; gap: 5px; }
.panel { display: flex; flex-direction: column; min-height: 0; position: relative; }
.panel header, .view header { display: flex; align-items: center; height: 29px; flex: none; padding: 0 3px 0 2px; gap: 5px; color: #555; }
.panel header h2, .view header h2 { flex: 1; font-size: 15px; line-height: 20px; color: #444; white-space: nowrap; overflow: hidden; min-width: 0; }
.panel header h2.accent { color: #2a66b0; }
header button svg { width: 10px; height: 10px; }
.pbody { flex: 1; min-height: 0; display: flex; border: 1px solid #ccc; background: #f0f0f0; overflow: hidden; }
.filters { flex: 1; display: flex; flex-direction: column; padding: 11px 6px 0 7px; overflow: hidden; }
.box { border: 1px solid #777; background: #fff; flex: none; }
.search { display: flex; align-items: center; height: 17px; padding: 0 2px 0 5px; border-bottom: 1px solid #c8c8c8; background: #fff; }
.search input { flex: 1; min-width: 0; font-size: 9px; }
.search input::placeholder { color: #777; opacity: 1; }
.search svg { width: 14px; height: 14px; }
.flist { height: 148px; margin-bottom: 3px; }
.frows { border-left: 14px solid #f0f0f0; font: 9px/14px "Liberation Sans", Arial, sans-serif; }
.frows li { height: 15px; padding-left: 3px; border-left: 1px solid #ccc; border-bottom: 1px solid #e4e4e4; position: relative; }
.frows li:nth-child(3n) { height: 14px; }
.frows .sel { background: #cbcbcb; }
.frows .sel::before { content: ""; position: absolute; left: -10px; top: 4px; border: 3px solid transparent; border-left: 4px solid #777; border-right: 0; }
.wide { height: 23px; flex: none; border: 1px solid #aaa; background: #fdfdfd; margin-bottom: 3px; color: #333; }
.wide:disabled { color: #aaa; }
.thick { width: 100%; flex: none; margin: 2px 0 3px; border: 0; border-top: 2px solid #b5b5b5; }
.minitabs { display: flex; flex: none; height: 15px; border-bottom: 1px solid #ccc; margin-left: 1px; }
.minitabs button { padding: 0 4px; }
.minitabs .on { width: 37px; text-align: left; background: #fff; border: 1px solid #ddd; border-bottom: 0; color: #2a7a9a; padding: 0 3px; }
.radio { display: flex; align-items: center; flex: none; height: 16px; gap: 2px; padding-left: 7px; }
.minitabs + .radio { margin-top: 6px; }
.radio input { appearance: none; width: 10px; height: 10px; border: 1px solid #888; border-radius: 50%; background: #fff; }
.radio input:checked { background: radial-gradient(#333 0 2px, #fff 3px); }
.treebox { display: flex; height: 174px; margin: 2px 4px 0; overflow: hidden; }
.tree { flex: 1; background: #f0f0f0; font: 9px/14px "Liberation Sans", Arial, sans-serif; }
.tree li { display: flex; align-items: center; height: 15px; }
.tree li:nth-child(3n) { height: 14px; }
.tree svg, .rt svg { width: 10px; height: 10px; margin-right: 2px; }
.tree label { flex: 1; height: 100%; display: flex; align-items: center; gap: 4px; padding-left: 3px; background: #fff; border-left: 1px solid #bbb; border-bottom: 1px solid #ddd; }
.l1 { padding-left: 16px; } .l2 { padding-left: 31px; } .l3 { padding-left: 46px; }
.tree .sel label, .rt .sel span { background: #cbcbcb; }
input[type="checkbox"] { appearance: none; flex: none; width: 9px; height: 9px; border: 2px solid #222; background: #fff; display: grid; place-items: center; }
input[type="checkbox"]:checked::after { content: ""; width: 5px; height: 3px; border: solid #222; border-width: 0 0 1px 1px; transform: rotate(-45deg); }
input[type="checkbox"].soft { border: 1px solid #aaa; }
input[type="checkbox"].soft:checked::after { border-color: #888; }
.cut { display: flex; align-items: flex-start; gap: 1px; margin: 7px 3px 0 1px; height: 15px; flex: none; overflow: hidden; }
.cut button { border: 1px solid #bbb; border-bottom: 0; background: #fdfdfd; width: 78px; height: 20px; padding-bottom: 12px; }
.cut button + button { flex: 1; padding-bottom: 3px; }

.sb { width: 15px; flex: none; display: flex; flex-direction: column; background: #e2e2e2; }
.sb button { height: 14px; flex: none; display: grid; place-items: center; background: #fff; border: 1px solid #bbb; }
.sb button svg, .hb button svg { width: 10px; height: 10px; }
.sb .thumb { flex: 1; background: #fff; border: 1px solid #bbb; }
.sb .s28 { height: 28px; } .sb .s146 { height: 146px; } .sb .s24 { height: 24px; } .sb .s106 { height: 106px; }
.sb .s56 { flex: none; height: 56px; }
.sb .knob { height: 14px; background: #fff; border: 1px solid #ccc; }
.grow { flex: 1; }
.sb.pale { width: 13px; background: #ececec; }
.docktabs { display: flex; height: 20px; flex: none; align-items: stretch; }
.docktabs button { padding: 0 5px; overflow: hidden; }
.docktabs .on { background: #fff; border: 1px solid #ccc; border-top: 0; padding: 0 4px; }
.left .docktabs { justify-content: space-between; }
.right .docktabs button { padding: 0 4px; }
.docktabs.top button { padding: 0 4px; }

.center { display: flex; flex-direction: column; min-width: 0; padding: 2px 0 1px; }
.schedule { display: grid; grid-template-columns: 370px minmax(0, 1fr); gap: 3px; height: 200px; flex: none; }
.gridframe, .ganttframe { border: 1px solid #777; display: flex; flex-direction: column; min-width: 0; overflow: hidden; background: #fff; }
.gridtop { display: flex; flex: 1; min-height: 0; overflow: hidden; }
.gridtop table { width: 355px; flex: none; height: 0; table-layout: fixed; border-collapse: separate; border-spacing: 0; font: 10px/14px "Liberation Sans", Arial, sans-serif; color: #222; }
.c1 { width: 27px; } .c2 { width: 27px; } .c3 { width: 200px; } .c4 { width: 76px; } .c5 { width: 25px; }
.gridtop td, .gridtop th { padding: 0 3px; border-right: 1px solid #ccc; border-bottom: 1px solid #ccc; overflow: hidden; white-space: nowrap; text-align: left; height: 15px; }
.gridtop td:last-child { padding: 0 0 0 2px; border-right: 0; }
.gridtop tbody tr:nth-child(3n) > * { height: 16px; }
.gridtop thead th { height: 34px; background: #e6e6e6; text-align: center; line-height: 12px; padding-right: 16px; }
.gridtop thead th.mark { color: #b08a50; font-weight: 400; }
.gridtop tbody th { background: #e6e6e6; font-weight: 400; color: #555; border-bottom-color: #d5d5d5; }
.gridtop span { display: flex; align-items: center; }
.gridtop span svg { width: 10px; height: 10px; margin-left: -12px; margin-right: 2px; }
.n1 { padding-left: 36px; } .n2 { padding-left: 50px; } .n3 { padding-left: 63px; }
.gridtop .focus { margin: 0 -3px 0 46px; padding-left: 4px; outline: 2px solid #111; outline-offset: -1px; }
.sum1 td { background: #8fafc0; font-weight: 700; } .sum2 td { background: #8399ac; font-weight: 700; } .sum3 td { background: #5785b3; font-weight: 700; }
.cur td { background: #ffff45; }
.hb { display: flex; height: 13px; flex: none; background: #e4e4e4; }
.hb button { width: 15px; display: grid; place-items: center; background: #fff; }
.hb .knob { width: 200px; background: #fff; border: 1px solid #ccc; }
.hb .corner { width: 13px; background: #ececec; }
.hb.flat { background: #f3f3f3; }
.thumb5 { flex: 6; background: #cbcbcb; } .track1 { flex: 1; background: #f3f3f3; }
.gantt { width: 100%; flex: 1; min-height: 0; overflow: hidden; }
.glabel { font: 11px "Liberation Sans", Arial, sans-serif; fill: #222; }

.view { flex: 1; min-height: 0; display: flex; flex-direction: column; border-top: 3px solid #c9c9c9; }
.scene { flex: 1; min-height: 0; width: 100%; }
.nav { font: 700 6px "Liberation Sans", Arial, sans-serif; fill: #444; text-anchor: middle; }

.icontabs { display: flex; height: 19px; flex: none; align-items: center; padding: 0 2px 0 4px; justify-content: space-between; }
.icontabs svg { width: 13px; height: 13px; }
.icontabs .on { display: flex; align-items: center; gap: 2px; background: #fff; border: 1px solid #ccc; border-bottom: 0; padding: 0 3px; height: 100%; }
.icontabs .arrow svg { width: 9px; height: 9px; }
.rbody { flex: 1; min-height: 0; display: flex; flex-direction: column; gap: 6px; background: #f0f0f0; border: 1px solid #ccc; padding: 4px 7px 4px 5px; }
.rtree { display: flex; height: 232px; overflow: hidden; }
.rmain { flex: 1; background: #f0f0f0; }
.rt { font: 9px/14px "Liberation Sans", Arial, sans-serif; }
.rt li { display: flex; align-items: center; height: 15px; }
.rt li:nth-child(3n) { height: 14px; }
.rt span { flex: 1; height: 100%; padding-left: 4px; background: #fff; border-left: 1px solid #bbb; border-bottom: 1px solid #ddd; }
.r0 { padding-left: 2px; } .r1 { padding-left: 16px; } .r2 { padding-left: 31px; } .r3 { padding-left: 45px; } .r4 { padding-left: 60px; } .r5 { padding-left: 87px; }
.props { flex: 1; min-height: 0; display: flex; overflow: hidden; border: 1px solid #ccc; background: #fff; }
.props table { flex: 1; height: 0; table-layout: fixed; border-collapse: separate; border-spacing: 0; }
.p1 { width: 14px; } .p2 { width: 121px; }
.props td, .props th { height: 14px; padding: 0 0 0 4px; line-height: 13px; text-align: left; white-space: nowrap; overflow: hidden; border-right: 1px solid #eee; border-bottom: 1px solid #eaeaea; color: #333; }
.props td:first-child { background: #f0f0f0; padding: 0 2px; }
.props .cat th { background: #f0f0f0; font-size: 10px; }
.props .hot td { background: #ececec; }
.props .dim td { color: #a0a0a0; }
.props svg { width: 10px; height: 10px; }
.props .sub { display: inline-block; vertical-align: middle; margin: 0 4px 0 -2px; background: #eee; }
.props input[type="checkbox"] { width: 11px; height: 11px; margin-left: -2px; }
.props .strong:checked::after { border-color: #222; }
.props .sb { border: 0; padding-top: 90px; }

.menu { position: absolute; z-index: 2; left: 43px; right: 1px; top: 148px; background: #fdfdfd; border: 1px solid #aaa; box-shadow: 1px 2px 2px #0004; padding: 0 1px; display: flex; flex-direction: column; }
.menu button { display: flex; align-items: center; position: relative; height: 19px; padding: 0 9px 0 23px; color: #444; }
.menu button:disabled { color: #aaa; }
.menu .hover { background: #cbcbcb; }
.menu hr { margin: 2px 4px 3px 23px; border: 0; border-top: 1px solid #ddd; }
.menu kbd { margin-left: auto; font: inherit; }
.menu .mi { position: absolute; left: 2px; top: 3px; width: 14px; height: 13px; }
.subm { margin-left: auto; margin-right: -6px; border: 4px solid transparent; border-left: 4px solid #222; border-right: 0; }
.pointer { position: absolute; left: 28px; top: 24px; width: 40px; height: 40px; mix-blend-mode: multiply; }

.status { flex: none; height: 19px; background: #f0f0f0; display: grid; align-items: center; grid-template-columns: 413fr 109fr 60fr 97fr 78fr 151fr 142fr 80fr 33fr 110fr; padding-left: 7px; white-space: nowrap; }
.zoom { display: flex; align-items: center; justify-content: space-between; padding-right: 4px; }
.zoom button { color: #888; font-size: 14px; }
.zoom input { appearance: none; width: 70px; height: 12px; background: linear-gradient(#ccc, #ccc) no-repeat center / 100% 1px; }
.zoom input::-webkit-slider-thumb { appearance: none; width: 4px; height: 12px; background: #eee; border: 1px solid #888; }
.edge { flex: none; height: 2px; background: linear-gradient(90deg, #222 40px, #ccc 40px 327px, #333 327px); }
```
FILE: scene.js
```js
// Pile caps: centre x, centre y, width, height, optional floor line (0..1 of the height)
const caps = [
  [472,440,14,8],[519.5,440.5,13,8],[562.5,441,12,8],[606,441,11,8],[649,442,11,8],[692.5,442,11,8],[741,442.5,12,8],
  [457.5,459,16,9],[509,459,14,9],[555.5,459.5,13,9],[602,460,12,9],[649,461,11,9],[696,461,12,9],[748.5,462,13,9],
  [441,480,17,10],[496.5,480.5,15,10],[547,481,14,10],[598,482,13,10],[649,482.5,12,11],[700.5,483,13,11],[757.5,484,15,10],
  [595.5,496,13,11,.8],[649,496.5,13,11,.8],[703,497,14,11,.8],[763,498,15,11,.8],
  [566.5,503,15,12],[649,512.5,14,12],[706,513,14,12],[770,514,16,12],
  [561.5,519.5,16,13],[589,529,15,13],[709,531,15,13],[777,531.5,18,13],
  [553.5,548,18,14],[585.5,548.5,17,14],[713,550,17,15],[785,551,19,15],
  [541.5,590,20,17,.12],[577.5,590,19,17,.12],[649,591.5,18,17,.12],[721,592.5,19,17,.12],[802,594,22,17,.12],
  [526.5,643,23,21,.7],[567,643.5,22,21,.7],[649,645.5,20,21,.7],[731,647,23,21,.7],[823.5,648.5,27,21,.7]
];
const vanishX = 649;
const topShare = 0.7;
const shape = (pts, fill) => `<polygon points="${pts}" fill="${fill}"/>`;
document.getElementById("caps").innerHTML = caps.map(([x, y, w, h, line]) => {
  const lean = (vanishX - x) * h * 0.002;
  const half = (w - Math.abs(lean)) / 2;
  const edge = t => lean * (0.5 - Math.min(t, topShare) / topShare);
  const side = Math.sign(lean);
  const band = (a, b, c) => shape([
    x + edge(a) - half, y - h / 2 + a * h, x + edge(a) + half, y - h / 2 + a * h,
    x + edge(b) + half, y - h / 2 + b * h, x + edge(b) - half, y - h / 2 + b * h
  ].join(" "), c);
  const flank = shape([
    x + edge(0) + side * half, y - h / 2, x + edge(0) + side * half, y - h / 2 + 0.3 * h,
    x + edge(1) + side * half, y + h / 2, x + edge(1) + side * half, y - h / 2 + topShare * h
  ].join(" "), "#5e0068");
  let out = flank + band(0, topShare, "#84008f") + band(topShare, 1, "#97009f");
  if (line) out += band(line, line + 1 / h, "#ecd5f5");
  return out;
}).join("");
```
